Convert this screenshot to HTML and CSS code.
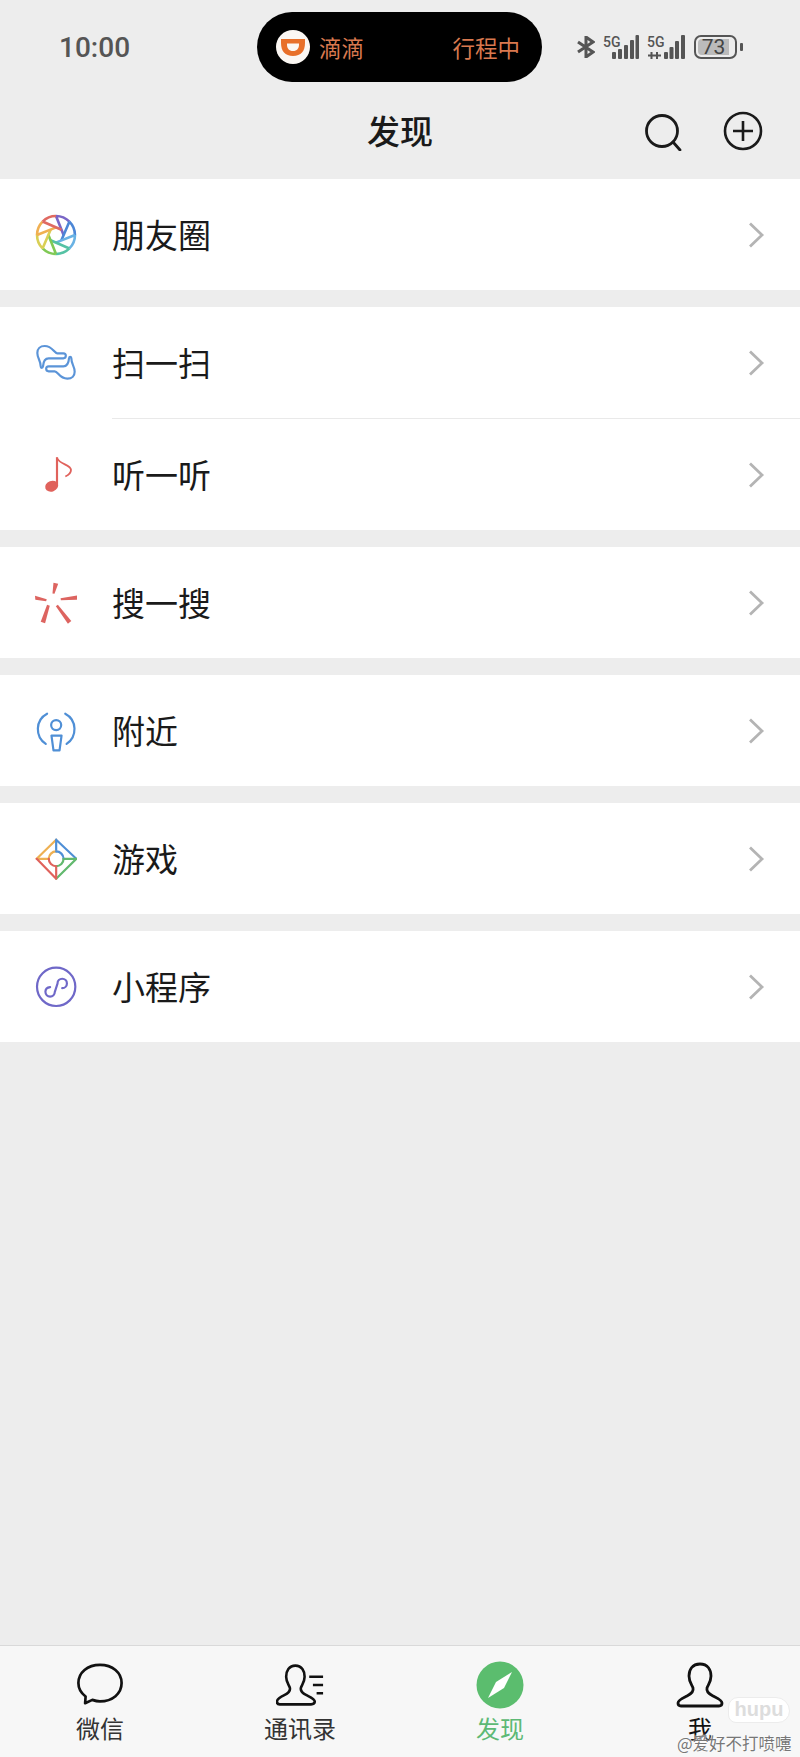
FILE: index.html
```html
<!DOCTYPE html>
<html lang="zh-CN">
<head>
  <meta charset="UTF-8" />
  <meta name="viewport" content="width=device-width, initial-scale=1.0" />
  <title>发现</title>
  <link rel="stylesheet" href="styles.css">
</head>
<body>
  <div class="phone">
    <div class="status-bar">
      <div class="status-left">10:00</div>
      <div class="island">
        <div class="island-app">
          <svg class="didi-logo" viewBox="0 0 34 34">
            <circle cx="17" cy="17" r="17" fill="#fbf7f3"/>
            <path fill="#e8702a" fill-rule="evenodd" d="M5 9h24v4c0 8-4 13-12 13S5 21 5 13zM11 13.500v1c0 4 2 6.500 6 6.500s6-2.500 6-6.500v-1z"/>
          </svg>
          <span>滴滴</span>
        </div>
        <span>行程中</span>
      </div>
      <div class="status-right">
        <svg class="bt-icon" viewBox="0 0 18 22">
          <path d="M1 6l15 10-7 5V1l7 5L1 16" fill="none" stroke="#555" stroke-width="3"/>
        </svg>
        <svg class="signal" viewBox="0 0 36 24">
          <text class="signal-label" x="0" y="12">5G</text>
          <rect x="9" y="17" width="4" height="7" rx="1"/>
          <rect x="15" y="14" width="4" height="10" rx="1"/>
          <rect x="21" y="10" width="4" height="14" rx="1"/>
          <rect x="27" y="5" width="4" height="19" rx="1"/>
          <rect x="32.500" y="0" width="3.500" height="24" rx="1"/>
        </svg>
        <svg class="signal signal-two" viewBox="0 0 38 24">
          <text class="signal-label" x="0" y="12">5G</text>
          <path d="M1 20.500h13M4.500 17v7M10 17v7" stroke="#555" stroke-width="2" fill="none"/>
          <rect x="17" y="17" width="4" height="7" rx="1"/>
          <rect x="22.500" y="12" width="4" height="12" rx="1"/>
          <rect x="28" y="6" width="4" height="18" rx="1"/>
          <rect x="34" y="0" width="4" height="24" rx="1"/>
        </svg>
        <div class="battery">
          <div class="battery-body"><span class="battery-fill">73</span></div>
          <div class="battery-nub"></div>
        </div>
      </div>
    </div>

    <header class="title-bar">
      <h1 class="title">发现</h1>
      <div class="title-actions">
        <svg class="action-icon" viewBox="-2 -2 40 40">
          <circle cx="18" cy="18" r="15.500" fill="none" stroke="#1a1a1a" stroke-width="2.800"/>
          <path d="M29 29l7 8" stroke="#1a1a1a" stroke-width="2.800" stroke-linecap="round"/>
        </svg>
        <svg class="action-icon" viewBox="0 0 40 40">
          <circle cx="20" cy="20" r="18" fill="none" stroke="#1a1a1a" stroke-width="2.600"/>
          <path d="M20 10v20M10 20h20" stroke="#1a1a1a" stroke-width="2.600"/>
        </svg>
      </div>
    </header>

    <main class="menu">
      <section class="group">
        <div class="row">
          <svg class="row-icon" viewBox="0 0 42 42" fill="none" stroke-width="2.600" stroke-linejoin="round">
            <path stroke="#7a66c6" d="M21 2A19 19 0 0 1 34.400 7.600M21 2L28.600 21.100"/>
            <path stroke="#4c86d6" transform="rotate(45 21 21)" d="M21 2A19 19 0 0 1 34.400 7.600M21 2L28.600 21.100"/>
            <path stroke="#69b2e4" transform="rotate(90 21 21)" d="M21 2A19 19 0 0 1 34.400 7.600M21 2L28.600 21.100"/>
            <path stroke="#55c2a4" transform="rotate(135 21 21)" d="M21 2A19 19 0 0 1 34.400 7.600M21 2L28.600 21.100"/>
            <path stroke="#80c955" transform="rotate(180 21 21)" d="M21 2A19 19 0 0 1 34.400 7.600M21 2L28.600 21.100"/>
            <path stroke="#d9cf55" transform="rotate(225 21 21)" d="M21 2A19 19 0 0 1 34.400 7.600M21 2L28.600 21.100"/>
            <path stroke="#f0b052" transform="rotate(270 21 21)" d="M21 2A19 19 0 0 1 34.400 7.600M21 2L28.600 21.100"/>
            <path stroke="#e06a62" transform="rotate(315 21 21)" d="M21 2A19 19 0 0 1 34.400 7.600M21 2L28.600 21.100"/>
          </svg>
          <span class="row-text">朋友圈</span>
          <svg class="chevron" viewBox="0 0 16 26"><path d="M2 1.500L14 13 2 24.500"/></svg>
        </div>
      </section>

      <section class="group">
        <div class="row">
          <svg class="row-icon" viewBox="15 19 126 126" fill="none" stroke="#5b94d8" stroke-width="6.500" stroke-linejoin="round">
            <path d="M100 53H82C72 53 68 31 44 31C30 31 22 40 22 52C22 68 32 74 32 92C32 98 38 98 39 92C40 78 44 68 56 68H100C110 68 110 53 100 53Z"/>
            <path d="M56 107H74C84 107 88 129 112 129C126 129 134 120 134 108C134 92 124 86 124 68C124 62 118 62 117 68C116 82 112 92 100 92H56C46 92 46 107 56 107Z"/>
          </svg>
          <span class="row-text">扫一扫</span>
          <svg class="chevron" viewBox="0 0 16 26"><path d="M2 1.500L14 13 2 24.500"/></svg>
        </div>
        <div class="row-line"></div>
        <div class="row">
          <svg class="row-icon" viewBox="15 10.500 126 126" fill="none" stroke="#e0625c">
            <ellipse cx="65" cy="107" rx="20" ry="16" transform="rotate(-20 65 107)" fill="#e0625c" stroke="none"/>
            <path d="M81 20V105" stroke-width="6.500"/>
            <path d="M82 24C90 42 122 42 123 58C123 68 116 74 106 78" stroke-width="5.500"/>
          </svg>
          <span class="row-text">听一听</span>
          <svg class="chevron" viewBox="0 0 16 26"><path d="M2 1.500L14 13 2 24.500"/></svg>
        </div>
      </section>

      <section class="group">
        <div class="row">
          <svg class="row-icon" viewBox="105 67 125 125" fill="#dd6460">
            <path d="M160 69L174 72L163 102L157 101Z"/>
            <path d="M105 108L140 118L138 124L106 120Z"/>
            <path d="M232 107V120L182 121L181 115Z"/>
            <path d="M141 135L149 138L135 190L122 185Z"/>
            <path d="M167 139L173 135L213 183L203 191Z"/>
          </svg>
          <span class="row-text">搜一搜</span>
          <svg class="chevron" viewBox="0 0 16 26"><path d="M2 1.500L14 13 2 24.500"/></svg>
        </div>
      </section>

      <section class="group">
        <div class="row">
          <svg class="row-icon" viewBox="105 450 125 125" fill="none" stroke="#4f8fd6" stroke-width="6.500" stroke-linecap="round" stroke-linejoin="round">
            <path d="M141 461C105 480 105 530 137 551M195 461C231 480 231 530 199 551"/>
            <circle cx="168" cy="495" r="15"/>
            <path d="M154 526H184L178 570H160Z"/>
          </svg>
          <span class="row-text">附近</span>
          <svg class="chevron" viewBox="0 0 16 26"><path d="M2 1.500L14 13 2 24.500"/></svg>
        </div>
      </section>

      <section class="group">
        <div class="row">
          <svg class="row-icon" viewBox="105 835 125 125" fill="none" stroke-width="6.500" stroke-linecap="round" stroke-linejoin="round">
            <path stroke="#eeb052" d="M168 840L110 897H146"/>
            <path stroke="#4f8fd6" d="M168 840L228 897M168 840V875"/>
            <path stroke="#62b96e" d="M228 897L168 956M228 897H190"/>
            <path stroke="#e0625c" d="M110 897L168 956V919"/>
            <path stroke="#eeb052" d="M146 897A22 22 0 0 1 168 875"/>
            <path stroke="#4f8fd6" d="M168 875A22 22 0 0 1 190 897"/>
            <path stroke="#62b96e" d="M190 897A22 22 0 0 1 168 919"/>
            <path stroke="#e0625c" d="M168 919A22 22 0 0 1 146 897"/>
          </svg>
          <span class="row-text">游戏</span>
          <svg class="chevron" viewBox="0 0 16 26"><path d="M2 1.500L14 13 2 24.500"/></svg>
        </div>
      </section>

      <section class="group">
        <div class="row">
          <svg class="row-icon" viewBox="105 1220 125 125" fill="none" stroke="#6f68c8" stroke-width="6.500" stroke-linecap="round">
            <circle cx="168" cy="1282" r="57"/>
            <path d="M150 1283C141 1284 136 1290 136 1297A14 14 0 0 0 164 1297L172 1272A14 14 0 1 1 186 1286"/>
          </svg>
          <span class="row-text">小程序</span>
          <svg class="chevron" viewBox="0 0 16 26"><path d="M2 1.500L14 13 2 24.500"/></svg>
        </div>
      </section>
    </main>

    <nav class="tabbar">
      <div class="tab">
        <svg class="tab-icon" viewBox="0 0 50 48" fill="none" stroke="#111" stroke-width="2.800" stroke-linejoin="round">
          <path d="M25 3C12 3 2.500 11 2.500 22C2.500 28 6 33 10 36L9.500 43L17 39.500C20 40.500 22 41 25 41C38 41 47.500 33 47.500 22C47.500 11 38 3 25 3Z"/>
        </svg>
        <span class="tab-label">微信</span>
      </div>
      <div class="tab">
        <svg class="tab-icon" viewBox="0 0 52 48" fill="none" stroke="#111" stroke-width="2.800" stroke-linejoin="round">
          <path d="M21 3C14 3 11 9 11 15C11 21 14 24 15 27C16 31 13 33 9 35C5 37 1 39 1 42C1 44 2 45 4 45H38C40 45 42 44 42 42C42 39 37 37 33 35C29 33 26 31 27 27C28 24 31 21 31 15C31 9 28 3 21 3Z"/>
          <path d="M36 15H51M40 24H51M44 33H51"/>
        </svg>
        <span class="tab-label">通讯录</span>
      </div>
      <div class="tab tab-active">
        <svg class="tab-icon" viewBox="0 0 48 48">
          <circle cx="24" cy="24" r="23.500" fill="#5bbd6e"/>
          <path fill="#fff" d="M36 11L28 27L12 37L20 21Z"/>
        </svg>
        <span class="tab-label">发现</span>
      </div>
      <div class="tab">
        <svg class="tab-icon" viewBox="0 0 48 48" fill="none" stroke="#111" stroke-width="2.800" stroke-linejoin="round">
          <path d="M24 3C16 3 13 9 13 15C13 21 16 24 17 27C18 31 15 33 11 35C7 37 2 39 2 42C2 44 3 45 5 45H43C45 45 46 44 46 42C46 39 41 37 37 35C33 33 30 31 31 27C32 24 35 21 35 15C35 9 32 3 24 3Z"/>
        </svg>
        <span class="tab-label tab-label-dark">我</span>
      </div>
    </nav>

    <div class="hupu-badge">hupu</div>
    <div class="watermark">@爱好不打喷嚏</div>
  </div>
</body>
</html>
```

FILE: styles.css
```css
* {
  box-sizing: border-box;
}
body {
  margin: 0;
  background: #ededed;
  font-family: "Noto Sans CJK SC", "Liberation Sans", sans-serif;
}
.phone {
  position: relative;
  display: flex;
  flex-direction: column;
  width: 800px;
  height: 1757px;
  overflow: hidden;
  background: #ededed;
}

/* status bar */
.status-bar {
  display: flex;
  align-items: center;
  height: 70px;
  margin-top: 12px;
}
.status-left {
  width: 257px;
  padding-left: 59px;
  font-family: "Roboto", "Liberation Sans", sans-serif;
  font-size: 28px;
  font-weight: 500;
  color: #555;
}
.island {
  display: flex;
  align-items: center;
  justify-content: space-between;
  width: 285px;
  height: 70px;
  padding: 0 22px 0 19px;
  border-radius: 35px;
  background: #000;
  font-size: 22.500px;
  color: #d9794f;
}
.island-app {
  display: flex;
  align-items: center;
  gap: 9px;
}
.didi-logo {
  width: 34px;
  height: 34px;
}
.status-right {
  display: flex;
  align-items: center;
  width: 258px;
  padding-left: 35px;
}
.bt-icon {
  width: 18px;
  height: 22px;
}
.signal {
  width: 36px;
  height: 24px;
  margin-left: 8px;
  overflow: visible;
  fill: #555;
}
.signal-two {
  width: 38px;
  margin-left: 8px;
}
.signal-label {
  font-family: "Roboto", "Liberation Sans", sans-serif;
  font-size: 14px;
  font-weight: 500;
  fill: #555;
}
.battery {
  display: flex;
  align-items: center;
  gap: 3px;
  margin-left: 9px;
}
.battery-body {
  width: 43px;
  height: 24px;
  padding: 2px;
  border: 2px solid #555;
  border-radius: 7px;
}
.battery-fill {
  display: block;
  width: 31px;
  height: 16px;
  border-radius: 4px 0 0 4px;
  background: #bbb;
  font-family: "Roboto", "Liberation Sans", sans-serif;
  font-size: 21px;
  line-height: 16px;
  text-align: center;
  color: #444;
}
.battery-nub {
  width: 3px;
  height: 8px;
  border-radius: 1px;
  background: #555;
}

/* title */
.title-bar {
  display: flex;
  align-items: center;
  justify-content: center;
  position: relative;
  height: 97px;
}
.title {
  margin: 0 0 2px 0;
  font-size: 33px;
  font-weight: 500;
  color: #1a1a1a;
}
.title-actions {
  position: absolute;
  top: 29px;
  right: 37px;
  display: flex;
  gap: 41px;
}
.action-icon {
  width: 40px;
  height: 40px;
}

/* menu */
.menu {
  display: flex;
  flex-direction: column;
  gap: 17px;
  flex: 1;
}
.group {
  background: #fff;
}
.row {
  display: flex;
  align-items: center;
  height: 111px;
  padding: 0 36px 0 35px;
}
.row-line {
  height: 1px;
  margin-left: 112px;
  background: #e9e9e9;
}
.row-icon {
  width: 42px;
  height: 42px;
  flex: none;
}
.row-text {
  flex: 1;
  margin: 0 0 2px 35px;
  font-size: 33px;
  color: #1a1a1a;
}
.chevron {
  width: 16px;
  height: 26px;
  fill: none;
  stroke: #b4b4b4;
  stroke-width: 2.800;
}

/* tabs */
.tabbar {
  display: grid;
  grid-template-columns: repeat(4, 200px);
  height: 112px;
  border-top: 1px solid #d9d9d9;
  background: #f7f7f7;
}
.tab {
  display: flex;
  flex-direction: column;
  align-items: center;
  padding-top: 15px;
}
.tab-icon {
  width: 48px;
  height: 48px;
}
.tab-label {
  margin-top: 2px;
  font-size: 24px;
  line-height: 34px;
  color: #333;
}
.tab-label-dark {
  color: #111;
}
.tab-active .tab-label {
  color: #5db975;
}

/* hupu watermark over the tab bar */
.hupu-badge {
  position: absolute;
  left: 728px;
  top: 1697px;
  width: 62px;
  height: 26px;
  border: 1px solid #ececec;
  border-radius: 10px 14px 12px 8px;
  background: #fff;
  font-family: "Liberation Sans", sans-serif;
  font-size: 20px;
  font-weight: 700;
  line-height: 23px;
  text-align: center;
  color: #ddd;
}
.watermark {
  position: absolute;
  left: 677px;
  top: 1731px;
  font-size: 16.500px;
  line-height: 24px;
  white-space: nowrap;
  color: #777;
  text-shadow: 0 0 2px #fff, 0 0 2px #fff;
}
```
